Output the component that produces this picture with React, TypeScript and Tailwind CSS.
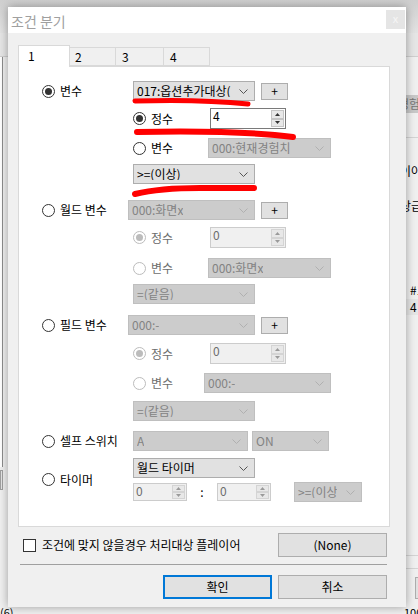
import React from "react";

type DropProps = { text: string; className?: string; disabled?: boolean };

function Radio({ checked = false, disabled = false }: { checked?: boolean; disabled?: boolean }) {
  return (
    <span
      className={`flex h-[13px] w-[13px] shrink-0 items-center justify-center rounded-full border bg-white ${
        disabled ? "border-[#bcbcbc]" : "border-[#333333]"
      }`}
    >
      {checked && (
        <span className={`h-[7px] w-[7px] rounded-full ${disabled ? "bg-[#bcbcbc]" : "bg-[#333333]"}`} />
      )}
    </span>
  );
}

function Chevron({ disabled = false }: { disabled?: boolean }) {
  return (
    <svg width="9" height="5" viewBox="0 0 9 5" className="shrink-0">
      <polyline
        points="0.5,0.5 4.5,4.5 8.5,0.5"
        fill="none"
        stroke={disabled ? "#b0b0b0" : "#555555"}
        strokeWidth="1"
      />
    </svg>
  );
}

function Drop({ text, className = "", disabled = false }: DropProps) {
  return (
    <div
      className={`flex h-[20px] shrink-0 items-center justify-between border pl-[3px] pr-[6px] ${
        disabled ? "border-[#bfbfbf] bg-[#cccccc] text-[#838383]" : "border-[#adadad] bg-[#e1e1e1] text-black"
      } ${className}`}
    >
      <span className="overflow-hidden whitespace-nowrap">{text}</span>
      <Chevron disabled={disabled} />
    </div>
  );
}

function Arrow({ up, disabled }: { up: boolean; disabled: boolean }) {
  return (
    <div
      className={`flex flex-1 items-center justify-center border ${
        disabled ? "border-[#d4d4d4] bg-[#e8e8e8]" : "border-[#c4c4c4] bg-[#e8e8e8]"
      }`}
    >
      <svg width="5" height="3" viewBox="0 0 5 3">
        <polygon
          points={up ? "0,3 5,3 2.5,0" : "0,0 5,0 2.5,3"}
          fill={disabled ? "#9a9a9a" : "#333333"}
        />
      </svg>
    </div>
  );
}

function Spin({
  value,
  className = "",
  disabled = false,
}: {
  value: string;
  className?: string;
  disabled?: boolean;
}) {
  return (
    <div
      className={`flex shrink-0 border ${
        disabled ? "border-[#cccccc] bg-[#f0f0f0] text-[#6d6d6d]" : "border-[#7a7a7a] bg-white text-black"
      } ${className}`}
    >
      <span className="flex-1 pl-[2px] pt-[1px]">{value}</span>
      <div className="flex w-[15px] flex-col p-[1px]">
        <Arrow up disabled={disabled} />
        <Arrow up={false} disabled={disabled} />
      </div>
    </div>
  );
}

function Plus() {
  return (
    <div className="ml-[6px] flex h-[17px] w-[27px] shrink-0 items-center justify-center border border-[#adadad] bg-[#e1e1e1] text-[12px]">
      +
    </div>
  );
}

function Btn({ label, primary = false }: { label: string; primary?: boolean }) {
  return (
    <div
      className={`flex h-[24px] w-[109px] items-center justify-center bg-[#e1e1e1] ${
        primary ? "border-2 border-[#0078d7]" : "border border-[#adadad]"
      }`}
    >
      {label}
    </div>
  );
}

export default function App() {
  return (
    <div className="relative h-[614px] w-[418px] overflow-hidden bg-[#f0f0f0] pl-[8px] pt-[7px] font-['Noto_Sans_CJK_KR','Noto_Sans',sans-serif] text-[12px] leading-none text-black">
      {/* background window behind the dialog */}
      <div className="absolute left-0 top-0 h-[33px] w-full bg-gradient-to-b from-[#cfcfcf] to-[#e3e3e3]" />
      <div className="absolute left-0 top-[33px] h-[24px] w-full border-b border-[#cfcfcf] bg-[#e6e6e6]" />
      <div className="absolute left-0 top-[57px] h-[410px] w-[3px] border-r border-[#8c8c8c] bg-white" />
      <div className="absolute left-0 top-[470px] h-[20px] w-[3px] border border-[#a0a0a0] bg-[#e6e6e6]" />
      <div className="absolute left-[406px] top-[95px] h-[18px] w-[20px] bg-[#c8c8c8]" />
      <span className="absolute left-[398px] top-[98px] whitespace-nowrap text-[#777777]">경험</span>
      <div className="absolute left-[406px] top-[137px] h-px w-[20px] bg-[#d4d4d4]" />
      <span className="absolute left-[400px] top-[165px] whitespace-nowrap">이아</span>
      <span className="absolute left-[400px] top-[200px] whitespace-nowrap">상급</span>
      <span className="absolute left-[410px] top-[284px] whitespace-nowrap">#1</span>
      <div className="absolute left-[406px] top-[299px] h-[16px] w-[20px] bg-[#e6e6e6]" />
      <span className="absolute left-[410px] top-[301px]">4</span>
      <div className="absolute left-[406px] top-[555px] h-px w-[20px] bg-[#d4d4d4]" />
      <div className="absolute left-[406px] top-[568px] h-px w-[20px] bg-[#d4d4d4]" />
      <div className="absolute left-[415px] top-[577px] h-[22px] w-[20px] border border-[#adadad] bg-[#e1e1e1]" />
      <span className="absolute left-0 top-[607px] whitespace-nowrap text-[11px]">(6)</span>
      <span className="absolute left-[404px] top-[607px] whitespace-nowrap text-[11px]">100</span>

      {/* dialog */}
      <div className="relative z-10 flex h-[600px] w-[398px] flex-col bg-[#f0f0f0] shadow-[0_0_9px_rgba(0,0,0,0.35)]">
        {/* title bar */}
        <div className="flex h-[26px] items-start justify-between bg-white">
          <span className="pl-[3px] pt-[7px] text-[14px] text-[#a0a0a0]">조건 분기</span>
          <div className="mr-[1px] mt-[3px] flex h-[19px] w-[19px] items-center justify-center bg-[#e5e5e5] pb-[2px] text-[11px] text-[#f6f6f6]">
            x
          </div>
        </div>

        {/* body */}
        <div className="flex flex-1 flex-col pl-[10px] pt-[12px]">
          {/* tabs */}
          <div className="flex h-[21px] items-end">
            <div className="relative z-10 -mb-px flex h-[22px] w-[52px] items-start border border-b-0 border-[#d9d9d9] bg-white pl-[9px] pt-[4px]">
              1
            </div>
            <div className="flex h-[19px] w-[46px] items-start border-y border-r border-[#d9d9d9] pl-[5px] pt-[3px]">2</div>
            <div className="flex h-[19px] w-[48px] items-start border-y border-r border-[#d9d9d9] pl-[6px] pt-[3px]">3</div>
            <div className="flex h-[19px] w-[46px] items-start border-y border-r border-[#d9d9d9] pl-[6px] pt-[3px]">4</div>
          </div>

          {/* panel */}
          <div className="flex h-[461px] w-[372px] flex-col border border-[#d9d9d9] bg-white pl-[23px] pt-[14px]">
            {/* 변수 */}
            <div className="flex h-[20px] items-center">
              <div className="flex w-[91px] items-center gap-[5px]">
                <Radio checked />
                <span>변수</span>
              </div>
              <Drop text="017:옵션추가대상(" className="w-[122px]" />
              <Plus />
            </div>
            <div className="mt-[7px] flex h-[21px] items-center pl-[91px]">
              <div className="flex w-[77px] items-center gap-[5px]">
                <Radio checked />
                <span>정수</span>
              </div>
              <Spin value="4" className="h-[21px] w-[76px]" />
            </div>
            <div className="mt-[9px] flex h-[20px] items-center pl-[91px]">
              <div className="flex w-[75px] items-center gap-[5px]">
                <Radio />
                <span>변수</span>
              </div>
              <Drop text="000:현재경험치" className="w-[123px]" disabled />
            </div>
            <div className="mt-[6px] flex pl-[91px]">
              <Drop text=">=(이상)" className="w-[122px]" />
            </div>

            {/* 월드 변수 */}
            <div className="mt-[16px] flex h-[20px] items-center">
              <div className="flex w-[86px] items-center gap-[5px]">
                <Radio />
                <span>월드 변수</span>
              </div>
              <Drop text="000:화면x" className="w-[127px]" disabled />
              <Plus />
            </div>
            <div className="mt-[7px] flex h-[21px] items-center pl-[91px] text-[#6d6d6d]">
              <div className="flex w-[77px] items-center gap-[5px]">
                <Radio checked disabled />
                <span>정수</span>
              </div>
              <Spin value="0" className="h-[21px] w-[76px]" disabled />
            </div>
            <div className="mt-[10px] flex h-[20px] items-center pl-[91px] text-[#6d6d6d]">
              <div className="flex w-[75px] items-center gap-[5px]">
                <Radio disabled />
                <span>변수</span>
              </div>
              <Drop text="000:화면x" className="w-[123px]" disabled />
            </div>
            <div className="mt-[6px] flex pl-[91px]">
              <Drop text="=(같음)" className="w-[122px]" disabled />
            </div>

            {/* 필드 변수 */}
            <div className="mt-[11px] flex h-[20px] items-center">
              <div className="flex w-[86px] items-center gap-[5px]">
                <Radio />
                <span>필드 변수</span>
              </div>
              <Drop text="000:-" className="w-[127px]" disabled />
              <Plus />
            </div>
            <div className="mt-[8px] flex h-[21px] items-center pl-[91px] text-[#6d6d6d]">
              <div className="flex w-[77px] items-center gap-[5px]">
                <Radio checked disabled />
                <span>정수</span>
              </div>
              <Spin value="0" className="h-[21px] w-[76px]" disabled />
            </div>
            <div className="mt-[9px] flex h-[20px] items-center pl-[91px] text-[#6d6d6d]">
              <div className="flex w-[71px] items-center gap-[5px]">
                <Radio disabled />
                <span>변수</span>
              </div>
              <Drop text="000:-" className="w-[127px]" disabled />
            </div>
            <div className="mt-[8px] flex pl-[91px]">
              <Drop text="=(같음)" className="w-[122px]" disabled />
            </div>

            {/* 셀프 스위치 */}
            <div className="mt-[10px] flex h-[20px] items-center">
              <div className="flex w-[91px] items-center gap-[5px]">
                <Radio />
                <span>셀프 스위치</span>
              </div>
              <Drop text="A" className="w-[115px]" disabled />
              <Drop text="ON" className="ml-[4px] w-[77px]" disabled />
            </div>

            {/* 타이머 */}
            <div className="mt-[7px] flex">
              <div className="flex w-[91px] items-center gap-[5px]">
                <Radio />
                <span>타이머</span>
              </div>
              <div className="flex flex-col">
                <Drop text="월드 타이머" className="w-[122px]" />
                <div className="mt-[5px] flex h-[18px] items-center">
                  <Spin value="0" className="h-[18px] w-[54px]" disabled />
                  <span className="w-[30px] text-center">:</span>
                  <Spin value="0" className="h-[18px] w-[54px]" disabled />
                  <Drop text=">=(이상" className="ml-[23px] h-[18px] w-[68px]" disabled />
                </div>
              </div>
            </div>
          </div>

          {/* bottom row */}
          <div className="mt-[6px] flex h-[24px] w-[369px] items-center justify-between pl-[5px]">
            <div className="flex items-center gap-[6px]">
              <span className="h-[13px] w-[13px] border border-[#333333] bg-white" />
              <span className="whitespace-nowrap">조건에 맞지 않을경우 처리대상 플레이어</span>
            </div>
            <Btn label="(None)" />
          </div>
          <div className="ml-[2px] mt-[7px] h-px w-[367px] bg-[#a0a0a0]" />
          <div className="mt-[10px] flex w-[369px] justify-end gap-[6px]">
            <Btn label="확인" primary />
            <Btn label="취소" />
          </div>
        </div>
      </div>

      {/* red annotations */}
      <svg
        className="pointer-events-none absolute left-0 top-0 z-20"
        width="418"
        height="614"
        viewBox="0 0 418 614"
      >
        <path d="M135,101 Q200,99 248,104" fill="none" stroke="#ff0000" strokeWidth="5" strokeLinecap="round" />
        <path d="M137,132 Q240,130 293,137" fill="none" stroke="#ff0000" strokeWidth="6" strokeLinecap="round" />
        <path d="M135,194 Q160,188 200,188 L254,188" fill="none" stroke="#ff0000" strokeWidth="6" strokeLinecap="round" />
      </svg>
    </div>
  );
}
